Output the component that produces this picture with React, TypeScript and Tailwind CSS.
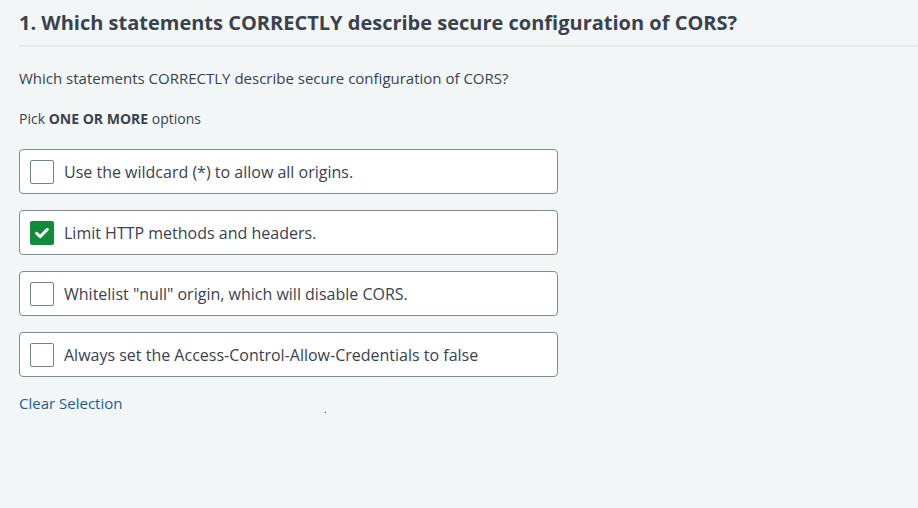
import { useState } from "react";

const options = [
  "Use the wildcard (*) to allow all origins.",
  "Limit HTTP methods and headers.",
  'Whitelist "null" origin, which will disable CORS.',
  "Always set the Access-Control-Allow-Credentials to false",
];

function Checkbox({ checked }: { checked: boolean }) {
  if (checked) {
    return (
      <span className="flex h-[24px] w-[24px] shrink-0 items-center justify-center rounded-[2px] bg-[#0f8b3a]">
        <svg width="16" height="16" viewBox="0 0 16 16" fill="none">
          <path
            d="M2.6 8.4 L6.1 11.7 L13.3 4.4"
            stroke="white"
            strokeWidth="3"
            strokeLinecap="round"
            strokeLinejoin="round"
          />
        </svg>
      </span>
    );
  }
  return (
    <span className="h-[24px] w-[24px] shrink-0 rounded-[2px] border border-[#6f8489] bg-white" />
  );
}

export default function App() {
  const [selected, setSelected] = useState<number[]>([1]);

  const toggle = (i: number) =>
    setSelected((s) => (s.includes(i) ? s.filter((x) => x !== i) : [...s, i]));

  return (
    <div className="h-[508px] w-[918px] overflow-hidden bg-[#f3f6f7] font-['Open_Sans',sans-serif] text-[#39424e]">
      <div className="pl-[19px]">
        <h1 className="pt-[9px] pb-[9px] text-[20px] leading-[27px] font-bold">
          1. Which statements CORRECTLY describe secure configuration of CORS?
        </h1>
        <div className="h-[2px] bg-[#e6ebed]" />
      </div>

      <div className="px-[19px]">
        <p className="mt-[21px] text-[15px] leading-[20px]">
          Which statements CORRECTLY describe secure configuration of CORS?
        </p>
        <p className="mt-[21px] text-[14px] leading-[20px]">
          Pick <span className="font-bold">ONE OR MORE</span> options
        </p>

        <div className="mt-[20px] flex w-[539px] flex-col gap-[16px]">
          {options.map((o, i) => (
            <button
              key={i}
              onClick={() => toggle(i)}
              className="flex h-[45px] items-center gap-[10px] rounded-[4px] border border-[#7b8f94] bg-white pl-[10px] text-left text-[16px]"
            >
              <Checkbox checked={selected.includes(i)} />
              <span>{o}</span>
            </button>
          ))}
        </div>

        <div className="relative mt-[16px] flex">
          <button
            onClick={() => setSelected([])}
            className="text-[15px] leading-[20px] text-[#1a5f8e]"
          >
            Clear Selection
          </button>
          <span className="absolute top-[19px] left-[306px] h-[1px] w-[1px] bg-[#3030c0]" />
        </div>
      </div>
    </div>
  );
}
